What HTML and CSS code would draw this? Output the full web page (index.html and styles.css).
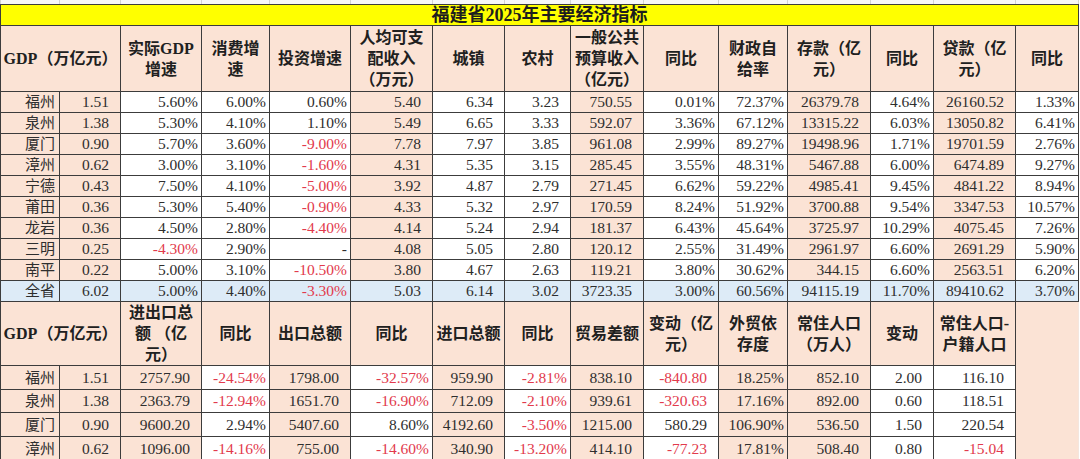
FILE: index.html
```html
<!DOCTYPE html>
<html lang="zh-CN">
<head>
<meta charset="utf-8">
<title>福建省2025年主要经济指标</title>
<link rel="stylesheet" href="styles.css">
</head>
<body>
<table class="sheet">
  <colgroup>
    <col class="w59"><col class="w61"><col class="w81"><col class="w68"><col class="w81">
    <col class="w82"><col class="w72"><col class="w66"><col class="w73"><col class="w75">
    <col class="w69"><col class="w83"><col class="w63"><col class="w82"><col class="w63">
  </colgroup>
  <tbody class="t1">
    <tr class="grid"><td></td><td></td><td></td><td></td><td></td><td></td><td></td><td></td><td></td><td></td><td></td><td></td><td></td><td></td><td></td></tr>
    <tr class="title"><td colspan="15">福建省2025年主要经济指标</td></tr>
    <tr class="h">
      <td colspan="2">GDP（万亿元）</td>
      <td>实际GDP<br>增速</td>
      <td>消费增<br>速</td>
      <td>投资增速</td>
      <td>人均可支<br>配收入<br>（万元）</td>
      <td>城镇</td>
      <td>农村</td>
      <td>一般公共<br>预算收入<br>（亿元）</td>
      <td>同比</td>
      <td>财政自<br>给率</td>
      <td>存款（亿<br>元）</td>
      <td>同比</td>
      <td>贷款（亿<br>元）</td>
      <td>同比</td>
    </tr>
    <tr class="d"><td>福州</td><td>1.51</td><td>5.60%</td><td>6.00%</td><td>0.60%</td><td>5.40</td><td>6.34</td><td>3.23</td><td>750.55</td><td>0.01%</td><td>72.37%</td><td>26379.78</td><td>4.64%</td><td>26160.52</td><td>1.33%</td></tr>
    <tr class="d"><td>泉州</td><td>1.38</td><td>5.30%</td><td>4.10%</td><td>1.10%</td><td>5.49</td><td>6.65</td><td>3.33</td><td>592.07</td><td>3.36%</td><td>67.12%</td><td>13315.22</td><td>6.03%</td><td>13050.82</td><td>6.41%</td></tr>
    <tr class="d"><td>厦门</td><td>0.90</td><td>5.70%</td><td>3.60%</td><td class="r">-9.00%</td><td>7.78</td><td>7.97</td><td>3.85</td><td>961.08</td><td>2.99%</td><td>89.27%</td><td>19498.96</td><td>1.71%</td><td>19701.59</td><td>2.76%</td></tr>
    <tr class="d"><td>漳州</td><td>0.62</td><td>3.00%</td><td>3.10%</td><td class="r">-1.60%</td><td>4.31</td><td>5.35</td><td>3.15</td><td>285.45</td><td>3.55%</td><td>48.31%</td><td>5467.88</td><td>6.00%</td><td>6474.89</td><td>9.27%</td></tr>
    <tr class="d"><td>宁德</td><td>0.43</td><td>7.50%</td><td>4.10%</td><td class="r">-5.00%</td><td>3.92</td><td>4.87</td><td>2.79</td><td>271.45</td><td>6.62%</td><td>59.22%</td><td>4985.41</td><td>9.45%</td><td>4841.22</td><td>8.94%</td></tr>
    <tr class="d"><td>莆田</td><td>0.36</td><td>5.30%</td><td>5.40%</td><td class="r">-0.90%</td><td>4.33</td><td>5.32</td><td>2.97</td><td>170.59</td><td>8.24%</td><td>51.92%</td><td>3700.88</td><td>9.54%</td><td>3347.53</td><td>10.57%</td></tr>
    <tr class="d"><td>龙岩</td><td>0.36</td><td>4.50%</td><td>2.80%</td><td class="r">-4.40%</td><td>4.14</td><td>5.24</td><td>2.94</td><td>181.37</td><td>6.43%</td><td>45.64%</td><td>3725.97</td><td>10.29%</td><td>4075.45</td><td>7.26%</td></tr>
    <tr class="d"><td>三明</td><td>0.25</td><td class="r">-4.30%</td><td>2.90%</td><td class="dash">-</td><td>4.08</td><td>5.05</td><td>2.80</td><td>120.12</td><td>2.55%</td><td>31.49%</td><td>2961.97</td><td>6.60%</td><td>2691.29</td><td>5.90%</td></tr>
    <tr class="d"><td>南平</td><td>0.22</td><td>5.00%</td><td>3.10%</td><td class="r">-10.50%</td><td>3.80</td><td>4.67</td><td>2.63</td><td>119.21</td><td>3.80%</td><td>30.62%</td><td>344.15</td><td>6.60%</td><td>2563.51</td><td>6.20%</td></tr>
    <tr class="d all"><td>全省</td><td>6.02</td><td>5.00%</td><td>4.40%</td><td class="r">-3.30%</td><td>5.03</td><td>6.14</td><td>3.02</td><td>3723.35</td><td>3.00%</td><td>60.56%</td><td>94115.19</td><td>11.70%</td><td>89410.62</td><td>3.70%</td></tr>
  </tbody>
  <tbody class="t2">
    <tr class="h">
      <td colspan="2">GDP（万亿元）</td>
      <td>进出口总<br>额&nbsp;（亿<br>元）</td>
      <td>同比</td>
      <td>出口总额</td>
      <td>同比</td>
      <td>进口总额</td>
      <td>同比</td>
      <td>贸易差额</td>
      <td>变动（亿<br>元）</td>
      <td>外贸依<br>存度</td>
      <td>常住人口<br>（万人）</td>
      <td>变动</td>
      <td>常住人口-<br>户籍人口</td>
      <td class="blank" rowspan="5"></td>
    </tr>
    <tr class="d r24"><td>福州</td><td>1.51</td><td>2757.90</td><td class="r">-24.54%</td><td>1798.00</td><td class="r">-32.57%</td><td>959.90</td><td class="r">-2.81%</td><td>838.10</td><td class="r">-840.80</td><td>18.25%</td><td>852.10</td><td>2.00</td><td>116.10</td></tr>
    <tr class="d r23"><td>泉州</td><td>1.38</td><td>2363.79</td><td class="r">-12.94%</td><td>1651.70</td><td class="r">-16.90%</td><td>712.09</td><td class="r">-2.10%</td><td>939.61</td><td class="r">-320.63</td><td>17.16%</td><td>892.00</td><td>0.60</td><td>118.51</td></tr>
    <tr class="d r24"><td>厦门</td><td>0.90</td><td>9600.20</td><td>2.94%</td><td>5407.60</td><td>8.60%</td><td>4192.60</td><td class="r">-3.50%</td><td>1215.00</td><td>580.29</td><td>106.90%</td><td>536.50</td><td>1.50</td><td>220.54</td></tr>
    <tr class="d r24"><td>漳州</td><td>0.62</td><td>1096.00</td><td class="r">-14.16%</td><td>755.00</td><td class="r">-14.60%</td><td>340.90</td><td class="r">-13.20%</td><td>414.10</td><td class="r">-77.23</td><td>17.81%</td><td>508.40</td><td>0.80</td><td class="r">-15.04</td></tr>
  </tbody>
</table>
</body>
</html>
```
FILE: styles.css
```css
html, body {
  margin: 0;
  padding: 0;
  background: #ffffff;
}

body {
  font-family: "Liberation Serif", "Noto Sans CJK SC", serif;
  color: #2e2e2e;
}

.sheet {
  border-collapse: collapse;
  table-layout: fixed;
  width: 1078px;
}

.w59 { width: 59px; }
.w61 { width: 61px; }
.w63 { width: 63px; }
.w66 { width: 66px; }
.w68 { width: 68px; }
.w69 { width: 69px; }
.w72 { width: 72px; }
.w73 { width: 73px; }
.w75 { width: 75px; }
.w81 { width: 81px; }
.w82 { width: 82px; }
.w83 { width: 83px; }

.sheet td {
  border: 1px solid #3c3c3c;
  padding: 0 11px 0 0;
  overflow: hidden;
  white-space: nowrap;
  vertical-align: middle;
}

/* spreadsheet gridline strip above the title */
.grid td {
  height: 4px;
  border-top: none;
  border-left: 1px solid #d2d2d2;
  border-right: 1px solid #d2d2d2;
  background: #f7f7f7;
}

.title td {
  height: 20px;
  background: #ffff00;
  text-align: center;
  font-weight: 700;
  font-size: 18px;
  line-height: 20px;
  padding: 0;
  color: #1e1e1e;
}

.h td {
  background: #fbe3d5;
  text-align: center;
  font-weight: 700;
  font-size: 16px;
  line-height: 21px;
  padding: 0;
  color: #202020;
}

.t1 .h td { height: 65px; }
.t2 .h td { height: 61px; }

.d td {
  height: 20px;
  font-size: 15.5px;
  line-height: 18px;
  text-align: right;
  background: #ffffff;
}

.r23 td { height: 22px; }
.r24 td { height: 23px; }

.d td:first-child {
  padding-right: 4px;
  font-size: 15px;
}

/* peach columns, top table */
.t1 .d td:nth-child(1),
.t1 .d td:nth-child(2),
.t1 .d td:nth-child(6),
.t1 .d td:nth-child(9),
.t1 .d td:nth-child(12),
.t1 .d td:nth-child(14) {
  background: #fbe3d5;
}

/* percentage columns, top table */
.t1 .d td:nth-child(3),
.t1 .d td:nth-child(4),
.t1 .d td:nth-child(5),
.t1 .d td:nth-child(10),
.t1 .d td:nth-child(11),
.t1 .d td:nth-child(13),
.t1 .d td:nth-child(15) {
  padding-right: 3px;
}

.t1 .d.all td {
  background: #ddebf7;
}

/* peach columns, bottom table */
.t2 .d td:nth-child(1),
.t2 .d td:nth-child(2),
.t2 .d td:nth-child(3),
.t2 .d td:nth-child(5),
.t2 .d td:nth-child(7),
.t2 .d td:nth-child(9),
.t2 .d td:nth-child(11),
.t2 .d td:nth-child(12) {
  background: #fbe3d5;
}

/* percentage columns, bottom table */
.t2 .d td:nth-child(4),
.t2 .d td:nth-child(6),
.t2 .d td:nth-child(8),
.t2 .d td:nth-child(11) {
  padding-right: 3px;
}

.sheet td.dash {
  padding-right: 5px;
}

.sheet td.r {
  color: #e23a4c;
}

.sheet td.blank {
  background: #fbe3d5;
  padding: 0;
  border-right-color: #f3e6de;
  border-bottom: none;
}
```
